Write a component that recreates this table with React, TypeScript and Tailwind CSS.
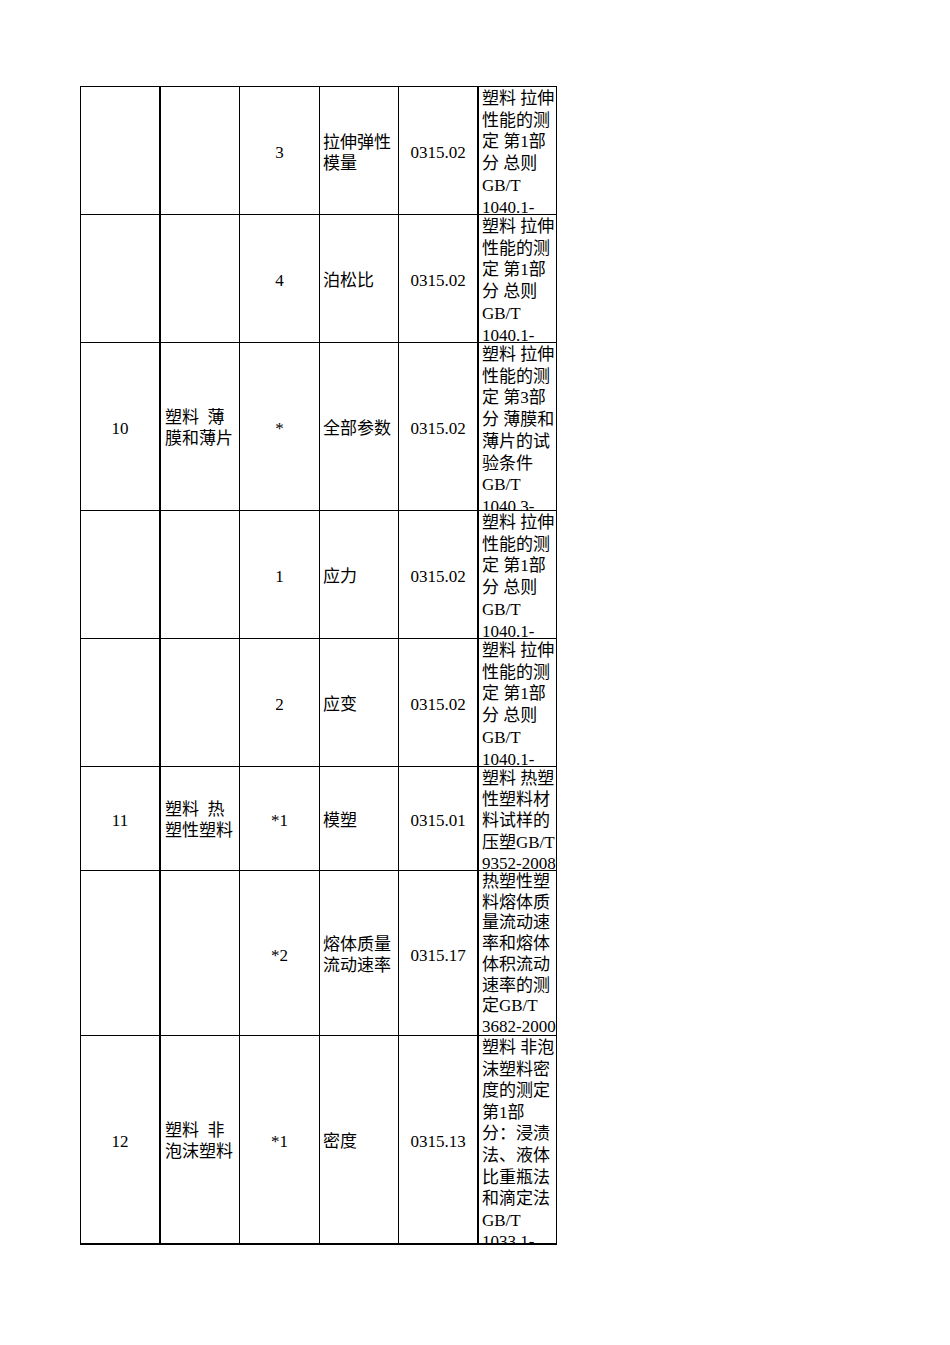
import React from "react";

type Row = {
  h: string;
  lh: string;
  no?: string;
  name?: string[];
  item: string;
  param: string[];
  code: string;
  std: string[];
};

const rows: Row[] = [
  {
    h: "h-[128px]",
    lh: "leading-[21.7px]",
    item: "3",
    param: ["拉伸弹性", "模量"],
    code: "0315.02",
    std: ["塑料 拉伸", "性能的测", "定 第1部", "分 总则", "GB/T", "1040.1-", "2018"],
  },
  {
    h: "h-[128px]",
    lh: "leading-[21.7px]",
    item: "4",
    param: ["泊松比"],
    code: "0315.02",
    std: ["塑料 拉伸", "性能的测", "定 第1部", "分 总则", "GB/T", "1040.1-", "2018"],
  },
  {
    h: "h-[168px]",
    lh: "leading-[21.7px]",
    no: "10",
    name: ["塑料  薄", "膜和薄片"],
    item: "*",
    param: ["全部参数"],
    code: "0315.02",
    std: ["塑料 拉伸", "性能的测", "定 第3部", "分 薄膜和", "薄片的试", "验条件", "GB/T", "1040.3-", "2006"],
  },
  {
    h: "h-[128px]",
    lh: "leading-[21.7px]",
    item: "1",
    param: ["应力"],
    code: "0315.02",
    std: ["塑料 拉伸", "性能的测", "定 第1部", "分 总则", "GB/T", "1040.1-", "2018"],
  },
  {
    h: "h-[128px]",
    lh: "leading-[21.7px]",
    item: "2",
    param: ["应变"],
    code: "0315.02",
    std: ["塑料 拉伸", "性能的测", "定 第1部", "分 总则", "GB/T", "1040.1-", "2018"],
  },
  {
    h: "h-[104px]",
    lh: "leading-[21.2px]",
    no: "11",
    name: ["塑料  热", "塑性塑料"],
    item: "*1",
    param: ["模塑"],
    code: "0315.01",
    std: ["塑料 热塑", "性塑料材", "料试样的", "压塑GB/T", "9352-2008"],
  },
  {
    h: "h-[165px]",
    lh: "leading-[20.7px]",
    item: "*2",
    param: ["熔体质量", "流动速率"],
    code: "0315.17",
    std: ["热塑性塑", "料熔体质", "量流动速", "率和熔体", "体积流动", "速率的测", "定GB/T", "3682-2000"],
  },
  {
    h: "h-[209px]",
    lh: "leading-[21.6px]",
    no: "12",
    name: ["塑料  非", "泡沫塑料"],
    item: "*1",
    param: ["密度"],
    code: "0315.13",
    std: ["塑料 非泡", "沫塑料密", "度的测定", "第1部", "分：浸渍", "法、液体", "比重瓶法", "和滴定法", "GB/T", "1033.1-", "2008"],
  },
];

const Lines = ({ lines }: { lines: string[] }) => (
  <>
    {lines.map((l, i) => (
      <div key={i} className="whitespace-pre">
        {l}
      </div>
    ))}
  </>
);

const App: React.FunctionComponent = () => {
  return (
    <div
      className="min-h-[1345px] w-[950px] bg-white pt-[86px] pl-[80px] text-[17px] text-black"
      style={{ fontFamily: '"Liberation Serif", "Noto Sans CJK SC", serif' }}
    >
      <div className="w-[477px] border-t border-black">
        {rows.map((r, i) => (
          <div key={i} className={`flex border-b border-black ${r.h} ${i === rows.length - 1 ? "border-b-2" : ""}`}>
            <div className="flex w-[79px] items-center justify-center border-l border-black pt-[4px] leading-[21px]">
              {r.no}
            </div>
            <div className="flex w-[80px] items-center border-l-2 border-black pl-[4px] pt-[3px] leading-[21px]">
              <div>{r.name && <Lines lines={r.name} />}</div>
            </div>
            <div className="flex w-[80px] items-center justify-center border-l border-black pt-[4px] leading-[21px]">
              {r.item}
            </div>
            <div className="flex w-[79px] items-center border-l border-black pl-[3px] pt-[4px] leading-[21px]">
              <div>
                <Lines lines={r.param} />
              </div>
            </div>
            <div className="flex w-[79px] items-center justify-center border-l border-black pt-[4px] leading-[21px]">
              {r.code}
            </div>
            <div className={`w-[80px] shrink-0 overflow-hidden border-l-2 border-r border-black pl-[3px] pt-px ${r.lh}`}>
              <Lines lines={r.std} />
            </div>
          </div>
        ))}
      </div>
    </div>
  );
};

export default App;
